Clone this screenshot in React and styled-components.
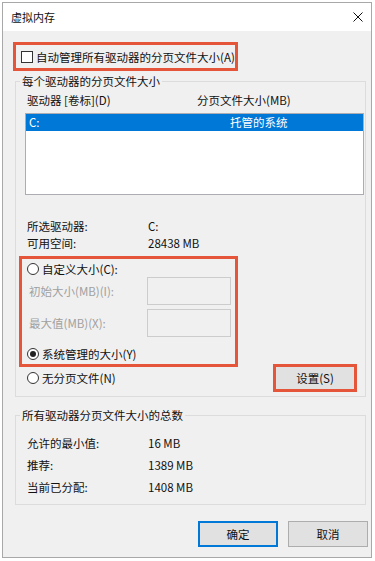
import React from "react";
import styled, {createGlobalStyle} from "styled-components";

const GlobalStyle = createGlobalStyle`
  html, body {
    margin: 0;
    padding: 0;
    background: #ffffff;
  }
  body {
    font-family: "Noto Sans CJK SC", "Noto Sans", "Liberation Sans", sans-serif;
    font-size: 11.5px;
    color: #111;
  }
`;

const Page = styled.div`
  width: 375px;
  height: 561px;
  padding: 2px 0 0 2px;
  box-sizing: border-box;
  overflow: hidden;
`;

const Window = styled.div`
  width: 370px;
  box-sizing: border-box;
  border: 1px solid #a8a8a8;
  display: flex;
  flex-direction: column;
`;

const TitleBar = styled.div`
  height: 28px;
  background: #ffffff;
  display: flex;
  align-items: center;
  justify-content: space-between;
  padding: 0 4px 0 8px;
  font-size: 11px;
`;

const CloseIcon = styled.svg`
  width: 10px;
  height: 10px;
  margin-right: 4px;
`;

const Body = styled.div`
  background: #f0f0f0;
  display: flex;
  flex-direction: column;
  padding-bottom: 10px;
`;

const RedBox = styled.div`
  border: 3px solid #e4553a;
  box-sizing: border-box;
  width: ${p => p.$w}px;
  margin-left: ${p => p.$left || 0}px;
  margin-top: ${p => p.$top || 0}px;
`;

const CheckRow = styled.label`
  display: flex;
  align-items: center;
  height: 23px;
  padding-left: 5px;
  gap: 3px;
`;

const CheckBox = styled.span`
  width: 12px;
  height: 12px;
  box-sizing: border-box;
  border: 1px solid #333;
  background: #fff;
  flex-shrink: 0;
`;

const Group = styled.div`
  margin-left: 12px;
  width: 351px;
  box-sizing: border-box;
  border: 1px solid #dcdcdc;
  margin-top: ${p => p.$top}px;
  padding-bottom: ${p => p.$bottom}px;
`;

const GroupTitle = styled.div`
  margin-top: -9px;
  margin-left: 4px;
  padding: 0 2px;
  width: fit-content;
  line-height: 16px;
  background: #f0f0f0;
`;

const HeaderRow = styled.div`
  display: flex;
  line-height: 16px;
  margin-top: 3px;
  padding-left: 11px;
`;

const Cell = styled.span`
  width: ${p => (p.$w ? `${p.$w}px` : "auto")};
  flex-shrink: 0;
  white-space: nowrap;
`;

const ListBox = styled.div`
  margin: 5px 0 0 9px;
  width: 339px;
  height: 82px;
  box-sizing: border-box;
  border: 1px solid #abadb3;
  background: #fff;
`;

const ListRow = styled.div`
  display: flex;
  height: 17px;
  line-height: 17px;
  padding-left: 3px;
  background: ${p => (p.$selected ? "#0078d7" : "transparent")};
  color: ${p => (p.$selected ? "#fff" : "#111")};
`;

const InfoRow = styled.div`
  display: flex;
  height: ${p => p.$h}px;
  line-height: ${p => p.$h}px;
  padding-left: 11px;
  margin-top: ${p => p.$top || 0}px;
`;

const SplitRow = styled.div`
  display: flex;
  align-items: flex-start;
  margin-top: 4px;
`;

const LeftCol = styled.div`
  display: flex;
  flex-direction: column;
  margin-left: 3px;
`;

const RadioRow = styled.label`
  display: flex;
  align-items: center;
  height: 16px;
  gap: 3px;
  padding-left: ${p => p.$pad}px;
  margin-top: ${p => p.$top || 0}px;
`;

const Radio = styled.span`
  position: relative;
  width: 12px;
  height: 12px;
  box-sizing: border-box;
  border: 1px solid #333;
  border-radius: 50%;
  background: #fff;
  flex-shrink: 0;

  &::after {
    content: "";
    display: ${p => (p.$checked ? "block" : "none")};
    position: absolute;
    left: 2px;
    top: 2px;
    width: 6px;
    height: 6px;
    border-radius: 50%;
    background: #222;
  }
`;

const InputRow = styled.div`
  display: flex;
  align-items: center;
  padding-left: 7px;
  margin-top: ${p => p.$top || 0}px;
  color: #a0a0a0;
`;

const SizeInput = styled.div`
  width: 84px;
  height: 28px;
  box-sizing: border-box;
  border: 1px solid #cccccc;
  background: #f0f0f0;
`;

const SetButton = styled.div`
  margin: 108px 0 0 35px;
  width: 84px;
  height: 28px;
  box-sizing: border-box;
  border: 3px solid #e4553a;
  background: #e1e1e1;
  display: flex;
  align-items: center;
  justify-content: center;
`;

const ButtonBar = styled.div`
  display: flex;
  justify-content: flex-end;
  gap: 10px;
  margin-top: 16px;
  padding-right: 3px;
`;

const DialogButton = styled.div`
  width: 80px;
  height: 26px;
  box-sizing: border-box;
  border: ${p => (p.$primary ? "2px solid #0078d7" : "1px solid #adadad")};
  background: #e1e1e1;
  display: flex;
  align-items: center;
  justify-content: center;
`;

const totals = [
  ["允许的最小值:", "16 MB"],
  ["推荐:", "1389 MB"],
  ["当前已分配:", "1408 MB"],
];

export default function App() {
  return (
    <Page>
      <GlobalStyle/>
      <Window>
        <TitleBar>
          <span>虚拟内存</span>
          <CloseIcon viewBox="0 0 10 10">
            <path d="M0.5 0.5 L9.5 9.5 M9.5 0.5 L0.5 9.5" stroke="#111" strokeWidth="1"/>
          </CloseIcon>
        </TitleBar>
        <Body>
          <RedBox $w={225} $left={10} $top={11}>
            <CheckRow>
              <CheckBox/>
              自动管理所有驱动器的分页文件大小(A)
            </CheckRow>
          </RedBox>

          <Group $top={10} $bottom={4}>
            <GroupTitle>每个驱动器的分页文件大小</GroupTitle>
            <HeaderRow>
              <Cell $w={170}>驱动器 [卷标](D)</Cell>
              <Cell>分页文件大小(MB)</Cell>
            </HeaderRow>
            <ListBox>
              <ListRow $selected>
                <Cell $w={201}>C:</Cell>
                <Cell>托管的系统</Cell>
              </ListRow>
            </ListBox>
            <InfoRow $h={17} $top={23}>
              <Cell $w={121}>所选驱动器:</Cell>
              <Cell>C:</Cell>
            </InfoRow>
            <InfoRow $h={17}>
              <Cell $w={121}>可用空间:</Cell>
              <Cell>28438 MB</Cell>
            </InfoRow>
            <SplitRow>
              <LeftCol>
                <RedBox $w={219}>
                  <RadioRow $pad={5} $top={2}>
                    <Radio/>
                    自定义大小(C):
                  </RadioRow>
                  <InputRow>
                    <Cell $w={118}>初始大小(MB)(I):</Cell>
                    <SizeInput/>
                  </InputRow>
                  <InputRow $top={4}>
                    <Cell $w={118}>最大值(MB)(X):</Cell>
                    <SizeInput/>
                  </InputRow>
                  <RadioRow $pad={5} $top={9}>
                    <Radio $checked/>
                    系统管理的大小(Y)
                  </RadioRow>
                  <div style={{height: 2}}/>
                </RedBox>
                <RadioRow $pad={8} $top={3}>
                  <Radio/>
                  无分页文件(N)
                </RadioRow>
              </LeftCol>
              <SetButton>设置(S)</SetButton>
            </SplitRow>
          </Group>

          <Group $top={18} $bottom={6}>
            <GroupTitle>所有驱动器分页文件大小的总数</GroupTitle>
            {totals.map(([label, value], i) => (
              <InfoRow key={label} $h={22} $top={i === 0 ? 9 : 0}>
                <Cell $w={121}>{label}</Cell>
                <Cell>{value}</Cell>
              </InfoRow>
            ))}
          </Group>

          <ButtonBar>
            <DialogButton $primary>确定</DialogButton>
            <DialogButton>取消</DialogButton>
          </ButtonBar>
        </Body>
      </Window>
    </Page>
  );
}
